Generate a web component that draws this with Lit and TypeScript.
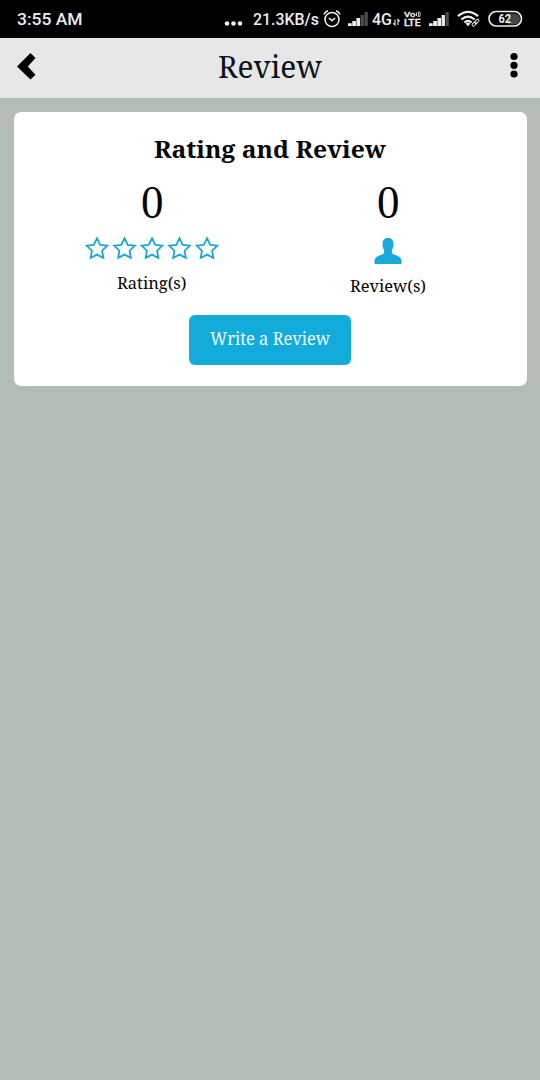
import { LitElement, html, css, svg } from "lit";
import { customElement, property } from "lit/decorators.js";

// One line of text fitted to a fixed width.
@customElement("fit-text")
class FitText extends LitElement {
  static styles = css`
    :host { display: block; flex: none; }
    svg { display: block; overflow: visible; }
    text { fill: currentColor; }
  `;
  @property() text = "";
  @property({ type: Number }) w = 10;
  @property({ type: Number }) h = 10;
  @property({ type: Number }) base = 10;
  render() {
    return html`<svg width=${this.w} height=${this.h}>
      <text x="0" y=${this.base} textLength=${this.w} lengthAdjust="spacingAndGlyphs">${this.text}</text>
    </svg>`;
  }
}

@customElement("status-bar")
class StatusBar extends LitElement {
  static styles = css`
    :host {
      display: flex; align-items: flex-start; height: 38px; box-sizing: border-box;
      padding-left: 17px; background: #000; color: #ececec;
      font: 500 17px Roboto, "Noto Sans", sans-serif;
    }
    svg { display: block; flex: none; }
    .time { margin-right: 141.500px; }
    .dots { margin-right: 10px; }
    .speed { margin-right: 4px; }
    .alarm { margin-right: 7px; }
    .signal { margin-right: 4px; }
    .data { margin-right: 1px; }
    .arrows { margin-right: 4px; }
    .volte { margin-right: 8px; overflow: visible; font: 500 8.500px Roboto, sans-serif; }
    .signal.second { margin-right: 8px; }
    .wifi { margin-right: 7px; }
    .battery { font: 700 12px Roboto, sans-serif; }
  `;
  signal(second = false) {
    return html`<svg class="signal ${second ? "second" : ""}" width="20" height="38" fill="#ececec">
      <path d="M0 23.300h3.700v2.700h-3.700zM4.200 21h3.700v5h-3.700zM8.400 18h3.700v8h-3.700z"/>
      <path fill=${second ? "#ececec" : "#4c4c4c"} d="M12.600 15h3.300v11h-3.300z"/>
      <path fill="#4c4c4c" d="M16.500 12h3.300v14h-3.300z"/>
    </svg>`;
  }
  render() {
    return html`
      <fit-text class="time" text="3:55 AM" w="65.500" h="38" base="25"></fit-text>
      <svg class="dots" width="19" height="38" fill="#ececec">
        <circle cx="3" cy="23.500" r="2.300"/><circle cx="9.500" cy="23.500" r="2.300"/><circle cx="16" cy="23.500" r="2.300"/>
      </svg>
      <fit-text class="speed" text="21.3KB/s" w="66" h="38" base="25"></fit-text>
      <svg class="alarm" width="18" height="38" fill="none" stroke="#ececec" stroke-width="1.600">
        <circle cx="9" cy="19.500" r="7"/>
        <path d="M5.800 18l3.200 2.700 3.200-2.700M1 14.500q1.200-2.700 4-3.700M17 14.500q-1.200-2.700-4-3.700"/>
      </svg>
      ${this.signal()}
      <fit-text class="data" text="4G" w="20" h="38" base="25"></fit-text>
      <svg class="arrows" width="7" height="38" fill="none" stroke="#ececec" stroke-width="1.100">
        <path d="M2 19.500v5.500l-1.800-1.800M5 25v-5.500l1.800 1.800"/>
      </svg>
      <svg class="volte" width="17" height="38" fill="#ececec" stroke="#ececec" stroke-width=".3">
        <text x="0" y="17" textLength="11.500" lengthAdjust="spacingAndGlyphs" font-size="8">Vo</text>
        <path d="M12.500 12.500v3.500M14 11.500q1.300 2.700 0 5.500M15.600 11.500q1.300 2.700 0 5.500" fill="none" stroke-width=".9"/>
        <text x="0" y="26" textLength="16.500" lengthAdjust="spacingAndGlyphs">LTE</text>
      </svg>
      ${this.signal(true)}
      <svg class="wifi" width="24" height="38" fill="none" stroke="#ececec" stroke-width="2.200">
        <path d="M1 16.200q10-8.500 20 0M4.300 19.500q6.700-5.800 13.400 0M7.300 22.500q3.700-3 7.400 0"/>
        <path d="M8.500 23.500q2.500-1.600 5 0l-2.500 2.800z" fill="#ececec" stroke="none"/>
        <path d="M15.500 25l5.500-5.500" stroke="#000" stroke-width="4.500"/>
        <g transform="rotate(-45 19 22.500)" stroke-width="1"><rect x="14.200" y="21" width="4.800" height="2.600" rx="1.300"/><rect x="18" y="21" width="4.800" height="2.600" rx="1.300"/></g>
      </svg>
      <svg class="battery" width="35" height="38" fill="#ececec">
        <path d="M20 13.500h6.500a5.500 5.500 0 0 1 0 11h-6.500z" fill="#454545"/>
        <rect x="1" y="11.500" width="32.500" height="14.500" rx="7.200" fill="none" stroke="#ececec" stroke-width="1.600"/>
        <text x="10.500" y="23.200" textLength="12.500" lengthAdjust="spacingAndGlyphs">62</text>
      </svg>`;
  }
}

@customElement("app-root")
class AppRoot extends LitElement {
  static styles = css`
    :host {
      display: block; height: 1080px; background: #b4bdb4; color: #050505; overflow: hidden;
      font-family: "Noto Serif", "Droid Serif", "DejaVu Serif Condensed", "DejaVu Serif", serif;
    }
    svg { display: block; }
    header {
      display: flex; justify-content: space-between; height: 60px; box-sizing: border-box;
      padding: 0 22px 0 17px; background: #e7e7e7;
    }
    .heading { font-size: 30px; color: #08131b; margin-right: 8px; }
    .card {
      margin: 14px 13px 0 14px; height: 274px; box-sizing: border-box; padding: 20px 21.500px 0 19.500px;
      display: flex; flex-direction: column; align-items: center; background: #fff; border-radius: 7px;
    }
    .title { font-size: 24px; font-weight: 700; }
    .columns { display: grid; grid-template-columns: 236px 236px; margin-top: 12px; }
    .column { display: flex; flex-direction: column; align-items: center; }
    .count { font-family: "Liberation Serif", serif; font-size: 46px; margin-left: 1.500px; }
    .stars { margin-top: 12px; }
    .person { margin: 14px 0 0 1px; }
    .label { font-size: 17px; margin-top: 9px; }
    button {
      margin: 18px 0 0; padding: 0; border: 0; width: 162px; height: 50px; border-radius: 6px;
      display: flex; justify-content: center; background: #13abdb; color: #f4fcff;
      font-family: inherit; font-size: 17.500px;
    }
  `;
  render() {
    return html`
      <status-bar></status-bar>
      <header>
        <svg width="20" height="60"><path d="M13.500 15L18.500 20 10.800 28.500 18.500 36.800 13.500 41.500 0 28.500z"/></svg>
        <fit-text class="heading" text="Review" w="104" h="60" base="40"></fit-text>
        <svg width="8" height="60"><circle cx="4" cy="18.500" r="3.600"/><circle cx="4" cy="27.300" r="3.600"/><circle cx="4" cy="36" r="3.600"/></svg>
      </header>
      <main class="card">
        <fit-text class="title" text="Rating and Review" w="232" h="38" base="26"></fit-text>
        <div class="columns">
          <div class="column">
            <fit-text class="count" text="0" w="22.500" h="42" base="35.500"></fit-text>
            <svg class="stars" width="134" height="24" fill="none" stroke="#18a8d6" stroke-width="1.800">
              ${[0, 1, 2, 3, 4].map((i) => svg`<path transform="translate(${i * 27.5} 0)" d="M12 2.200L15.200 8.800 22.300 9.700 17.100 14.700 18.300 21.800 12 18.600 5.700 21.800 6.900 14.700 1.700 9.700 8.800 8.800z"/>`)}
            </svg>
            <fit-text class="label" text="Rating(s)" w="69.500" h="24" base="20"></fit-text>
          </div>
          <div class="column">
            <fit-text class="count" text="0" w="22.500" h="42" base="35.500"></fit-text>
            <svg class="person" width="28" height="26" viewBox="0 0 28 26" fill="#18a9da">
              <path d="M14 0C17.500 0 19.500 2 19.300 6C19.700 6.500 19.700 8.500 18.900 9.500C18.600 11.500 17.800 12.500 17.800 14C18 16.200 19.500 16.300 22 17.200C26 18.700 27.500 20 27.500 23.500V26H.500V23.500C.500 20 2 18.700 6 17.200C8.500 16.300 10 16.200 10.200 14C10.200 12.500 9.400 11.500 9.100 9.500C8.300 8.500 8.300 6.500 8.700 6C8.500 2 10.500 0 14 0z"/>
            </svg>
            <fit-text class="label" text="Review(s)" w="76" h="24" base="19"></fit-text>
          </div>
        </div>
        <button><fit-text text="Write a Review" w="120" h="50" base="30"></fit-text></button>
      </main>`;
  }
}
